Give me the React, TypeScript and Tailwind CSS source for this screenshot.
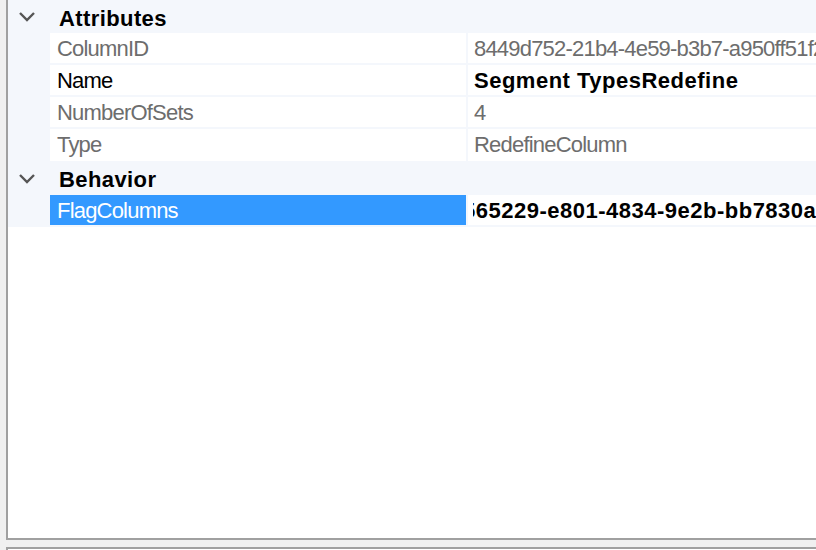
import React from 'react';

interface Property {
  name: string;
  value: string;
  readOnly?: boolean;
  modified?: boolean;
  selected?: boolean;
  clipLead?: string;
}

interface Category {
  title: string;
  props: Property[];
}

const categories: Category[] = [
  {
    title: 'Attributes',
    props: [
      { name: 'ColumnID', value: '8449d752-21b4-4e59-b3b7-a950ff51f2c4', readOnly: true },
      { name: 'Name', value: 'Segment TypesRedefine', modified: true },
      { name: 'NumberOfSets', value: '4', readOnly: true },
      { name: 'Type', value: 'RedefineColumn', readOnly: true },
    ],
  },
  {
    title: 'Behavior',
    props: [
      { name: 'FlagColumns', value: '65229-e801-4834-9e2b-bb7830a1', modified: true, selected: true, clipLead: '5' },
    ],
  },
];

function Chevron() {
  return (
    <svg width="18" height="11" viewBox="0 0 18 11" fill="none">
      <path d="M2 2 L9 9 L16 2" stroke="#555555" strokeWidth="2.4" />
    </svg>
  );
}

function PropertyRow({ prop, last }: { prop: Property; last: boolean }) {
  const nameColor = prop.selected ? 'text-white' : prop.readOnly ? 'text-[#6d6d6d]' : 'text-black';
  const valueClass = prop.modified
    ? 'font-bold text-black tracking-[0.5px]'
    : prop.readOnly
      ? 'text-[#6d6d6d] tracking-[-0.8px]'
      : 'text-black tracking-[-0.8px]';

  return (
    <div className={`flex h-[32px] ${last ? '' : 'border-b-2 border-[#f4f7fc]'}`}>
      <div className="w-[42px] shrink-0 bg-[#f4f7fc]" />
      <div
        className={`w-[416px] shrink-0 pl-[7px] pt-[1px] leading-[29px] tracking-[-0.8px] ${nameColor} ${
          prop.selected ? 'bg-[#3399ff]' : 'bg-white'
        }`}
      >
        {prop.name}
      </div>
      <div className="w-[2px] shrink-0 bg-[#f4f7fc]" />
      <div className={`flex-1 min-w-0 bg-white pt-[1px] leading-[29px] ${prop.clipLead ? 'pl-[5px]' : 'pl-[6px]'} ${valueClass}`}>
        <div className="overflow-hidden whitespace-nowrap">
          {prop.clipLead && <span className="-ml-[10px]">{prop.clipLead}</span>}
          {prop.value}
        </div>
      </div>
    </div>
  );
}

function CategoryBlock({ category, first }: { category: Category; first: boolean }) {
  return (
    <div>
      <div className={`flex items-center bg-[#f4f7fc] ${first ? 'h-[33px]' : 'h-[34px]'}`}>
        <div className="w-[42px] shrink-0 pl-[10px] flex items-center">
          <Chevron />
        </div>
        <span className="pl-[9px] pt-[3px] font-bold text-black tracking-[0.4px]">{category.title}</span>
      </div>
      {category.props.map((p, i) => (
        <PropertyRow
          key={p.name}
          prop={p}
          last={i === category.props.length - 1 && category.title === 'Attributes'}
        />
      ))}
    </div>
  );
}

export default function App() {
  return (
    <div
      className="w-[816px] h-[550px] overflow-hidden bg-[#f0f0f0] pl-[6px] flex flex-col text-[22px]"
      style={{ fontFamily: '"Liberation Sans", Arial, sans-serif' }}
    >
      <div className="h-[540px] shrink-0 bg-white border-l-2 border-b-2 border-[#a0a0a0] overflow-hidden">
        {categories.map((c, i) => (
          <CategoryBlock key={c.title} category={c} first={i === 0} />
        ))}
      </div>
      <div className="mt-[7px] flex-1 bg-white border-l-2 border-t-2 border-[#a0a0a0]" />
    </div>
  );
}
